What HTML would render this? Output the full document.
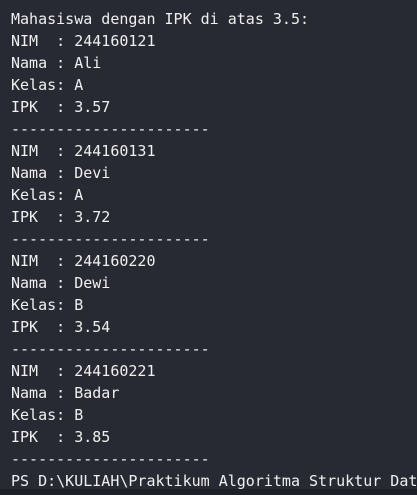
<!DOCTYPE html>
<html><head><meta charset="utf-8"><style>
html,body{margin:0;padding:0;}
body{width:417px;height:495px;background:#272a33;overflow:hidden;position:relative;}
pre{margin:0;position:absolute;left:11px;top:8px;font-family:"DejaVu Sans Mono","Liberation Mono",monospace;font-size:15px;line-height:22px;color:#f0f0f0;white-space:pre;}
.bar{position:absolute;left:0;right:0;top:489px;bottom:0;background:#1e2027;}
</style></head><body>
<pre>Mahasiswa dengan IPK di atas 3.5:
NIM  : 244160121
Nama : Ali
Kelas: A
IPK  : 3.57
----------------------
NIM  : 244160131
Nama : Devi
Kelas: A
IPK  : 3.72
----------------------
NIM  : 244160220
Nama : Dewi
Kelas: B
IPK  : 3.54
----------------------
NIM  : 244160221
Nama : Badar
Kelas: B
IPK  : 3.85
----------------------
PS D:\KULIAH\Praktikum Algoritma Struktur Data</pre>
<div class="bar"></div>
</body></html>
